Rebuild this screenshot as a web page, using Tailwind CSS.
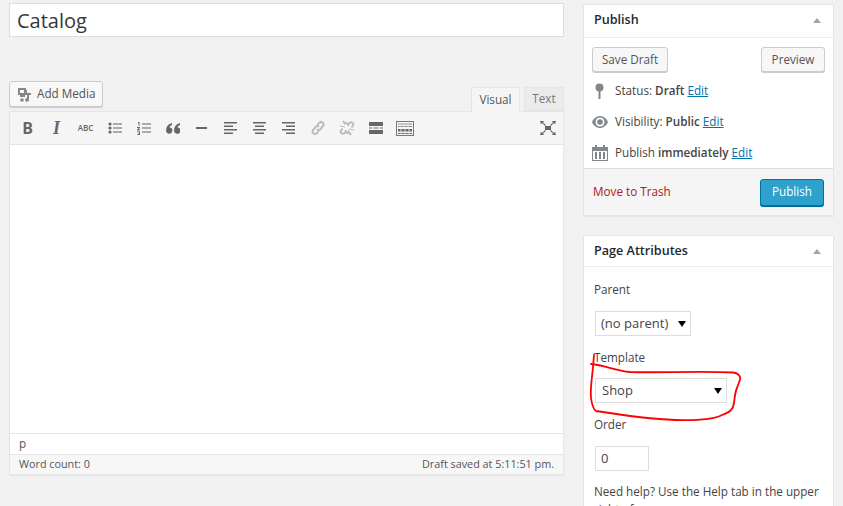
<!DOCTYPE html>
<html lang="en">
  <head>
    <meta charset="UTF-8" />
    <title>Edit Page</title>
    <script src="https://cdn.jsdelivr.net/npm/@tailwindcss/browser@4"></script>
  </head>
  <body class="relative h-[506px] w-[843px] overflow-hidden bg-[#f1f1f1] font-['Open_Sans',sans-serif] text-[11.700px] text-[#444]">
    <div class="flex items-start pl-[9px] pt-[3px]">
      <!-- editor column -->
      <div class="w-[555px]">
        <div class="flex h-[34px] items-center border border-[#ddd] bg-white pl-[7px] pt-[1px] text-[20px] text-[#32373c]">Catalog</div>
        <div class="mt-[44px] flex h-[30px] items-start justify-between">
          <button class="flex h-[26px] w-[94px] items-center gap-[6px] rounded-[3px] border border-[#ccc] bg-[#f7f7f7] pl-[7px] text-[#555] shadow-[0_1px_0_#ccc]">
            <svg width="14" height="15" viewBox="0 0 14 15" fill="#82878c"><path fill-rule="evenodd" d="M1 1h8v2h1v5H8v2H3V8H1zM3 3v3h4V3z"/><circle cx="5" cy="13" r="1.800"/><path d="M10 6h4v2h-2v5a1.900 1.900 0 1 1-2-2z"/></svg>
            Add Media
          </button>
          <div class="mt-[6px] flex h-[24px] items-start gap-[4px]">
            <div class="z-10 flex h-[25px] w-[49px] items-center justify-center border border-b-0 border-[#e5e5e5] bg-[#f5f5f5] text-[#555]">Visual</div>
            <div class="flex h-[24px] w-[40px] items-center justify-center border border-[#e5e5e5] bg-[#ebebeb] text-[#777]">Text</div>
          </div>
        </div>
        <div class="border border-[#e5e5e5] shadow-[0_1px_1px_rgba(0,0,0,0.04)]">
          <div class="flex h-[33px] items-center border-b border-[#e5e5e5] bg-[#f5f5f5] pl-[3px] text-[#666]">
            <span class="flex w-[29px] justify-center text-[16px] font-bold">B</span>
            <span class="flex w-[29px] justify-center font-['Liberation_Serif',serif] text-[18px] font-bold italic">I</span>
            <span class="flex w-[29px] justify-center text-[8px] font-semibold">ABC</span>
            <span class="flex w-[29px] justify-center">
              <svg width="14" height="12" viewBox="0 0 14 12" fill="#666"><circle cx="2" cy="2" r="1.600"/><circle cx="2" cy="6" r="1.600"/><circle cx="2" cy="10" r="1.600"/><path d="M5 1.500h9v1H5zM5 5.500h9v1H5zM5 9.500h9v1H5z"/></svg>
            </span>
            <span class="flex w-[29px] justify-center">
              <svg width="14" height="13" viewBox="0 0 14 13" fill="#666"><path d="M1 0h1.500v3.500H1.500V1H1zM0 5h3v1L1.500 7.500H3v1H0v-1L1.800 6H0zM0 9.500h3v3.500H0v-.8h2v-.6H1v-.6h1v-.7H0zM5 1.500h9v1H5zM5 5.500h9v1H5zM5 9.500h9v1H5z"/></svg>
            </span>
            <span class="flex w-[29px] justify-center">
              <svg width="14" height="11" viewBox="0 0 14 11" fill="#666"><path d="M6 0v2C4.500 2.500 3.800 3.500 3.600 4.500A3.100 3.100 0 1 1 .2 7C.2 3.500 2.500.8 6 0zM14 0v2c-1.500.5-2.200 1.500-2.400 2.500A3.100 3.100 0 1 1 8.200 7C8.200 3.500 10.500.8 14 0z"/></svg>
            </span>
            <span class="flex w-[29px] justify-center"><span class="h-[2px] w-[11px] bg-[#666]"></span></span>
            <span class="flex w-[29px] justify-center">
              <svg width="13" height="12" viewBox="0 0 13 12" fill="#666"><path d="M0 0h13v1.500H0zM0 3.500h9V5H0zM0 7h13v1.500H0zM0 10.500h9V12H0z"/></svg>
            </span>
            <span class="flex w-[29px] justify-center">
              <svg width="13" height="12" viewBox="0 0 13 12" fill="#666"><path d="M0 0h13v1.500H0zM2 3.500h9V5H2zM0 7h13v1.500H0zM2 10.500h9V12H2z"/></svg>
            </span>
            <span class="flex w-[29px] justify-center">
              <svg width="13" height="12" viewBox="0 0 13 12" fill="#666"><path d="M0 0h13v1.500H0zM4 3.500h9V5H4zM0 7h13v1.500H0zM4 10.500h9V12H4z"/></svg>
            </span>
            <span class="flex w-[29px] justify-center">
              <svg width="16" height="16" viewBox="0 0 16 16" fill="none" stroke="#bbb" stroke-width="2"><path d="M7 5.500l2-2.500a2.400 2.400 0 0 1 4 3l-2.500 3a2.400 2.400 0 0 1-3.500.3"/><path d="M9 10.500l-2 2.500a2.400 2.400 0 0 1-4-3l2.500-3a2.400 2.400 0 0 1 3.500-.3"/></svg>
            </span>
            <span class="flex w-[29px] justify-center">
              <svg width="16" height="16" viewBox="0 0 16 16" fill="none" stroke="#bbb" stroke-width="2"><path d="M9 5l2-2.500a2.200 2.200 0 0 1 3 3L12.500 7.500M7 11l-2 2.500a2.200 2.200 0 0 1-3-3L3.500 8.500"/><path d="M4 1l2 2.500a2 2 0 0 1 3 2.500M12 15l-2-2.500a2 2 0 0 1-3-2.500"/><path stroke-width="1" d="M10 9l5 1M9 10l2 5M6 7L1 6"/></svg>
            </span>
            <span class="flex w-[29px] justify-center">
              <svg width="14" height="12" viewBox="0 0 14 12" fill="#666"><path d="M0 0h14v4H0zM0 5.500h3v1H0zM4.500 5.500h5v1h-5zM11 5.500h3v1h-3zM0 8h14v4H0z"/></svg>
            </span>
            <span class="flex w-[29px] justify-center">
              <svg width="18" height="15" viewBox="0 0 18 15"><path fill="#777" fill-rule="evenodd" d="M0 0h18v15H0zM1 1v13h16V1z"/><path fill="none" stroke="#888" d="M2 3h14M2 5.500h14"/><path fill="#666" d="M2 8h14v2.500H2zM2 12h14v1H2z"/><path stroke="#ddd" d="M5 8v5M9 8v5M13 8v5M4 2v4M8 2v4M12 2v4"/></svg>
            </span>
            <span class="ml-auto mr-[1px] flex w-[29px] justify-center">
              <svg width="16" height="14" viewBox="0 0 16 14" fill="#666"><path d="M5 5h6v4H5z"/><path d="M0 0h4L3 1.200l3 3-.8.800-3-3L1 3.300zM16 0h-4l1 1.200-3 3 .8.800 3-3L15 3.300zM0 14h4l-1-1.200 3-3-.8-.8-3 3L1 10.700zM16 14h-4l1-1.200-3-3 .8-.8 3 3 1.200-1.300z"/></svg>
            </span>
          </div>
          <div class="h-[288px] bg-white"></div>
          <div class="flex h-[21px] items-center border-t border-[#e5e5e5] bg-white pl-[9px] text-[#555]">p</div>
          <div class="flex h-[20px] items-center justify-between border-t border-[#e5e5e5] bg-[#f7f7f7] px-[9px] text-[10.800px] text-[#555]">
            <span>Word count: 0</span>
            <span>Draft saved at 5:11:51 pm.</span>
          </div>
        </div>
      </div>

      <!-- sidebar -->
      <div class="ml-[19px] mt-[1px] w-[251px]">
        <div class="border border-[#e5e5e5] bg-white shadow-[0_1px_1px_rgba(0,0,0,0.04)]">
          <div class="flex h-[33px] items-center justify-between border-b border-[#eee] pb-[1px] pl-[10px] pr-[12px] text-[12.600px] font-semibold text-[#23282d]">
            <span>Publish</span>
            <span class="h-0 w-0 border-x-[4px] border-b-[5px] border-x-transparent border-b-[#a0a5aa]"></span>
          </div>
          <div class="flex justify-between px-[8px] pt-[9px]">
            <button class="flex h-[25px] w-[76px] items-center justify-center rounded-[3px] border border-[#ccc] bg-[#f7f7f7] text-[#555] shadow-[0_1px_0_#ccc]">Save Draft</button>
            <button class="flex h-[25px] w-[64px] items-center justify-center rounded-[3px] border border-[#ccc] bg-[#f7f7f7] text-[#555] shadow-[0_1px_0_#ccc]">Preview</button>
          </div>
          <div class="flex h-[34px] items-center pl-[11px] pt-[4px]">
            <svg class="mr-[11px]" width="9" height="16" viewBox="0 0 9 16" fill="#82878c"><circle cx="4.500" cy="4.500" r="4"/><path d="M3.500 7h2v9h-2z"/></svg>
            <span>Status: <b class="font-semibold">Draft</b> <a class="text-[#0073aa] underline">Edit</a></span>
          </div>
          <div class="flex h-[31px] items-center pl-[8px]">
            <svg class="mr-[7px]" width="16" height="12" viewBox="0 0 16 12"><path fill="#82878c" fill-rule="evenodd" d="M8 0c3.500 0 6.500 2.500 8 6-1.500 3.500-4.500 6-8 6S1.500 9.500 0 6c1.500-3.500 4.500-6 8-6zM8 1.500a4.500 4.500 0 1 0 0 9 4.500 4.500 0 0 0 0-9z"/><circle cx="8" cy="6" r="2.800" fill="#82878c"/></svg>
            <span>Visibility: <b class="font-semibold">Public</b> <a class="text-[#0073aa] underline">Edit</a></span>
          </div>
          <div class="flex h-[31px] items-center pl-[8px]">
            <svg class="mr-[7px]" width="16" height="16" viewBox="0 0 16 16" fill="#82878c"><path fill-rule="evenodd" d="M0 2h3V0h2v2h6V0h2v2h3v14H0zM1 6v9h14V6z"/><path d="M3 7h2v7H3zM7 7h2v7H7zM11 7h2v7h-2z"/></svg>
            <span>Publish <b class="font-semibold">immediately</b> <a class="text-[#0073aa] underline">Edit</a></span>
          </div>
          <div class="flex h-[47px] items-center justify-between border-t border-[#ddd] bg-[#f5f5f5] pl-[9px] pr-[9px]">
            <a class="text-[#a82020]">Move to Trash</a>
            <button class="flex h-[27px] w-[64px] items-center justify-center rounded-[3px] border border-[#0073aa] bg-[#2ea2cc] text-white shadow-[0_1px_0_#006799]">Publish</button>
          </div>
        </div>

        <div class="mt-[19px] border border-[#e5e5e5] bg-white pb-[40px]">
          <div class="flex h-[31px] items-center justify-between border-b border-[#eee] pl-[10px] pr-[12px] text-[12.600px] font-semibold text-[#23282d]">
            <span>Page Attributes</span>
            <span class="h-0 w-0 border-x-[4px] border-b-[5px] border-x-transparent border-b-[#a0a5aa]"></span>
          </div>
          <div class="pl-[10px] pr-[8px] pt-[14px]">
            <div class="h-[18px] font-medium">Parent</div>
            <div class="ml-[1px] mt-[12px] flex h-[25px] w-[96px] items-center justify-between border border-[#ddd] bg-white pl-[5px] pr-[4px] text-[13px]">(no parent)<span class="h-0 w-0 border-x-[4px] border-t-[6px] border-x-transparent border-t-black"></span></div>
            <div class="mt-[13px] h-[18px] font-medium">Template</div>
            <div class="ml-[1px] mt-[11px] flex h-[25px] w-[132px] items-center justify-between border border-[#ddd] bg-white pl-[6px] pr-[4px] text-[13px]">Shop<span class="h-0 w-0 border-x-[4px] border-t-[6px] border-x-transparent border-t-black"></span></div>
            <div class="mt-[13px] h-[18px] font-medium">Order</div>
            <div class="ml-[1px] mt-[12px] flex h-[25px] w-[54px] items-center border border-[#ddd] bg-white pl-[5px] text-[13px]">0</div>
            <p class="mt-[11px] leading-[18px]">Need help? Use the Help tab in the upper right of your screen.</p>
          </div>
        </div>
      </div>
    </div>

    <!-- red marker annotation drawn over the screenshot -->
    <svg class="absolute left-0 top-0" width="843" height="506" viewBox="0 0 843 506" fill="none" stroke="#f00" stroke-width="1.800" stroke-linecap="round" stroke-linejoin="round">
      <path d="M594 355L593 367C592 378 590 390 591 398C592 405 593 409 596 411C615 414 650 419 675 420C695 420.500 715 419 722 415C730 412 733 410 734 403C735 396 735 392 737 388C738 384 741 380 740 377C739 374 737 373 733 372.500C700 371 660 373 630 372C615 371 605 365 591 364"/>
    </svg>
  </body>
</html>
